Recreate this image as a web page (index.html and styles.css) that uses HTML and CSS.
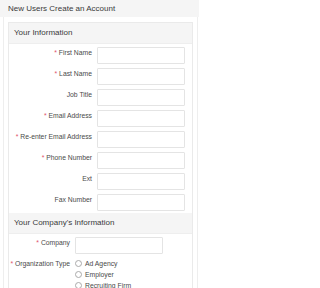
FILE: index.html
```html
<!DOCTYPE html>
<html>
<head>
<meta charset="utf-8">
<link rel="stylesheet" href="styles.css">
</head>
<body>
<div class="outer">
  <div class="outer-head">New Users Create an Account</div>
  <div class="outer-body">
    <div class="panel">
      <div class="panel-head">Your Information</div>
      <div class="panel-body info">
        <div class="row"><label><span class="req">*</span> First Name</label><input class="field" type="text"></div>
        <div class="row"><label><span class="req">*</span> Last Name</label><input class="field" type="text"></div>
        <div class="row"><label>Job Title</label><input class="field" type="text"></div>
        <div class="row"><label><span class="req">*</span> Email Address</label><input class="field" type="text"></div>
        <div class="row"><label><span class="req">*</span> Re-enter Email Address</label><input class="field" type="text"></div>
        <div class="row"><label><span class="req">*</span> Phone Number</label><input class="field" type="text"></div>
        <div class="row"><label>Ext</label><input class="field" type="text"></div>
        <div class="row last"><label>Fax Number</label><input class="field" type="text"></div>
      </div>
      <div class="panel-head">Your Company's Information</div>
      <div class="panel-body company">
        <div class="row"><label><span class="req">*</span> Company</label><input class="field" type="text"></div>
        <div class="row top"><label><span class="req">*</span> Organization Type</label>
          <div class="radios">
            <div class="radio"><span class="circle"></span>Ad Agency</div>
            <div class="radio"><span class="circle"></span>Employer</div>
            <div class="radio"><span class="circle"></span>Recruiting Firm</div>
          </div>
        </div>
      </div>
    </div>
  </div>
</div>
</body>
</html>
```
FILE: styles.css
```css
html, body { margin: 0; padding: 0; background: #fff; }
body { font-family: "Liberation Sans", Arial, sans-serif; color: #4a4a4a; }
.outer { width: 199px; }
.outer-head {
  background: #f5f5f5;
  height: 17px;
  line-height: 17px;
  padding-left: 8px;
  font-size: 8px;
  color: #3a3a3a;
}
.outer-body {
  margin-left: 3px;
  margin-right: 1px;
  border-left: 1px solid #eee;
  border-right: 1px solid #eee;
  padding: 5px 4px 0 4px;
}
.panel {
  border: 1px solid #eaeaea;
  border-bottom: none;
}
.panel-head {
  background: #f5f5f5;
  height: 20px;
  line-height: 20px;
  padding-left: 5px;
  font-size: 8px;
  color: #3a3a3a;
  border-bottom: 1px solid #eee;
}
.panel-body { padding: 3px 0 2px 0; }
.row {
  display: flex;
  align-items: flex-start;
  height: 17px;
  margin-bottom: 4px;
}
.row.last { margin-bottom: 0; }
.row.top { height: auto; margin-bottom: 0; }
label {
  font-size: 6.8px;
  line-height: 8px;
  padding-top: 2px;
  text-align: right;
  flex: none;
  padding-right: 5px;
  box-sizing: border-box;
  color: #4a4a4a;
}
.info label { width: 88px; }
.company label { width: 66px; }
.row.top label { padding-top: 2px; }
.req { color: #e0546a; }
.field {
  box-sizing: border-box;
  width: 88px;
  height: 17px;
  margin: 0;
  border: 1px solid #e4e4e4;
  border-radius: 1px;
  padding: 0;
  background: #fff;
}
.radios { display: flex; flex-direction: column; }
.radio {
  display: flex;
  align-items: center;
  height: 11px;
  font-size: 6.8px;
  color: #4a4a4a;
}
.circle {
  width: 5px;
  height: 5px;
  border: 1px solid #aaa;
  border-radius: 50%;
  margin-right: 3px;
  flex: none;
}
```
